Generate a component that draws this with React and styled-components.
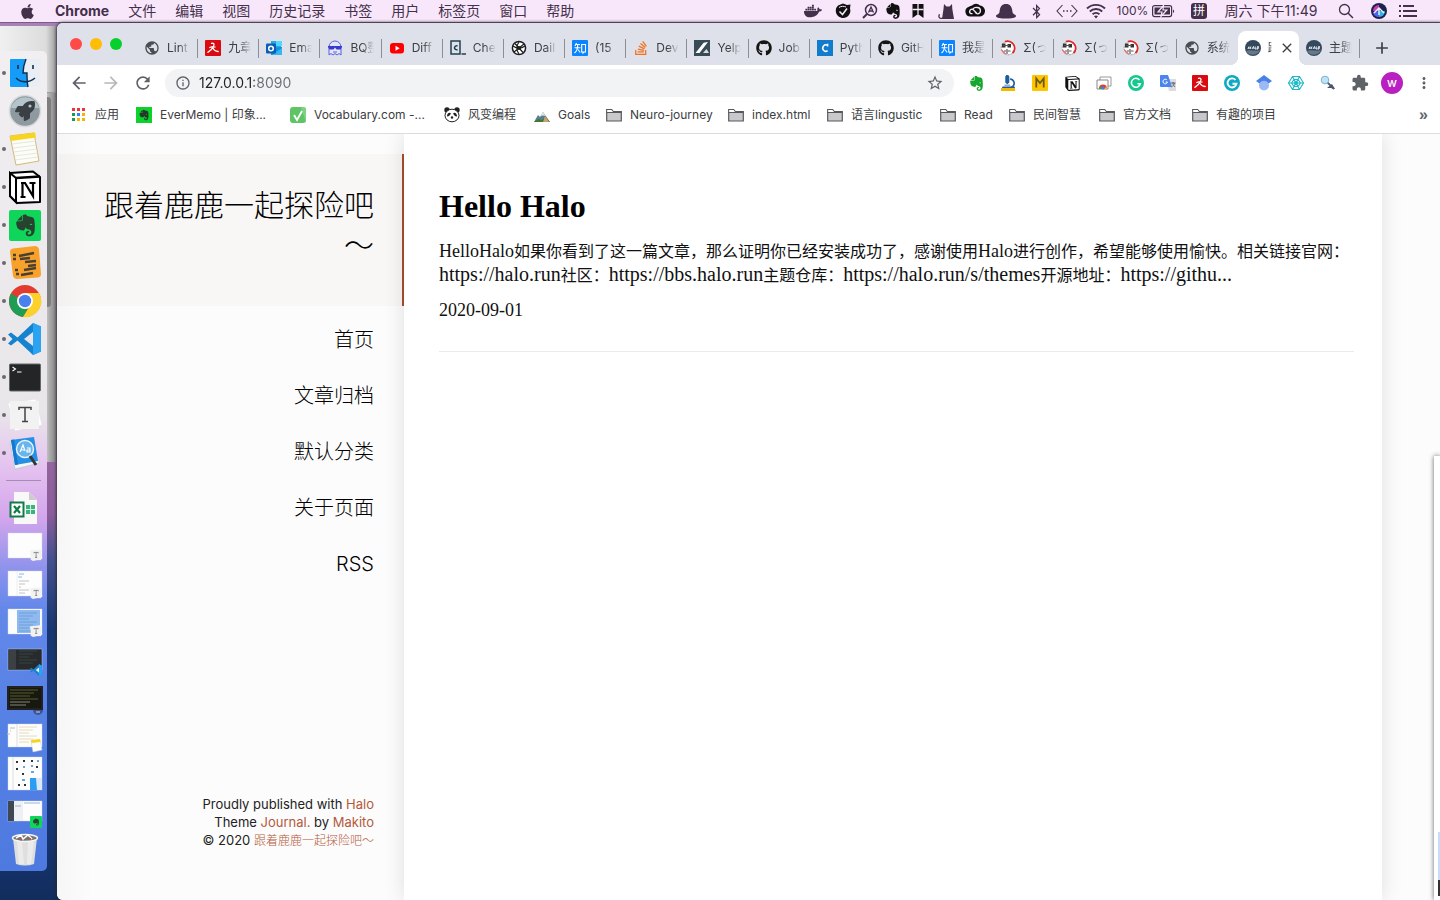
import React from 'react';
import styled, { createGlobalStyle, css } from 'styled-components';
import {
  FaApple, FaDocker, FaEvernote, FaGithub, FaBluetoothB, FaStackOverflow, FaRocket, FaMicroscope,
} from 'react-icons/fa';
import {
  MdArrowBack, MdArrowForward, MdRefresh, MdStarBorder, MdInfoOutline, MdMoreVert, MdAdd, MdClose,
  MdExtension, MdPublic,
} from 'react-icons/md';
import { SiNotion } from 'react-icons/si';

const UI_FONT = `Inter, "Noto Sans CJK SC", sans-serif`;
const SERIF_FONT = `"Liberation Serif", "Noto Sans CJK SC", serif`;

const GlobalStyle = createGlobalStyle`
  *, *::before, *::after { box-sizing: border-box; }
  body { margin: 0; font-family: ${UI_FONT}; color: #202124; }
  h1, h2, p, ul { margin: 0; padding: 0; }
  ul { list-style: none; }
  a { color: inherit; text-decoration: none; }
  button { border: 0; padding: 0; background: none; color: inherit; font: inherit; }
  svg { display: block; flex: none; }
`;

/* ---------- desktop ---------- */

const Desktop = styled.div`
  position: relative;
  display: flex;
  flex-direction: column;
  min-height: 100vh;
  overflow: hidden;
  background: linear-gradient(#a983b8 0, #94689f 50%, #8c5c9b 57%, #45518f 62%, #17366f 70%, #1b3f83 85%, #122c5d 100%);
`;

const MenuBar = styled.header`
  display: flex;
  align-items: center;
  justify-content: space-between;
  height: 23px;
  padding: 0 18px 0 0;
  background: #f8e7fb;
  border-bottom: 1px solid #7a5c88;
  color: #43304a;
  font-size: 14px;
`;

const MenuList = styled.nav`
  display: flex;
  align-items: center;
  gap: 19px;
  padding-left: 19px;
  line-height: 22px;
`;

const MenuButton = styled.button`
  white-space: nowrap;
  font-weight: ${(p) => (p.$strong ? 700 : 400)};
`;

const StatusList = styled.div`
  display: flex;
  align-items: center;
`;

const StatusItem = styled.div`
  display: flex;
  align-items: center;
  justify-content: center;
  gap: 4px;
  width: ${(p) => p.$w}px;
  white-space: nowrap;
  line-height: 22px;
  font-size: ${(p) => (p.$small ? 12 : 14)}px;
`;

const InputBadge = styled.span`
  width: 16px;
  height: 16px;
  border-radius: 3px;
  background: #43304a;
  color: #fff;
  font-size: 12px;
  line-height: 16px;
  text-align: center;
`;

const Workspace = styled.div`
  flex: 1;
  display: flex;
`;

const DockSide = styled.div`
  position: relative;
  flex: 0 0 57px;
  padding-top: 28px;
`;

const BackWindow = styled.div`
  position: absolute;
  left: 0;
  top: 3px;
  width: 56px;
  height: 436px;
  background: linear-gradient(90deg, #c6c6c6 46px, #a8a8a8 50px, #8b8b8b 55px);
  &::before {
    content: '';
    display: block;
    height: 67px;
    border-bottom: 1px solid #9b9b9b;
    background: linear-gradient(90deg, #f0f0f0, #dcdcdc 46px, #a5a5a5 55px);
  }
`;

const BackScroll = styled.div`
  position: absolute;
  left: 44px;
  top: 74px;
  width: 7px;
  height: 210px;
  border-radius: 4px;
  background: #7e7e7e;
`;

const Dock = styled.ul`
  position: relative;
  width: 47px;
  padding: 3px 0 2px;
  border-radius: 0 5px 5px 0;
  background: linear-gradient(#f1eff1 0, #e9e6ea 44%, #e6c6f0 50%, #d3a5ec 57%, #8f93ec 63%, #6388ea 68%, #5580e4 82%, #4e79df 100%);
`;

const DockItem = styled.li`
  display: flex;
  align-items: center;
  height: 38px;
  &::before {
    content: '';
    width: 4px;
    height: 4px;
    margin: 0 2px;
    border-radius: 50%;
    background: ${(p) => (p.$running ? '#6c686e' : 'transparent')};
  }
  > svg { width: 34px; height: 34px; overflow: visible; }
`;

const DockRule = styled.li`
  height: 17px;
  margin: 0 6px;
  padding-top: 8px;
  &::before { content: ''; display: block; height: 1px; background: #a98cb4; }
`;

const SideWindow = styled.div`
  position: absolute;
  right: 0;
  bottom: 0;
  width: 6px;
  height: 444px;
  padding: 376px 0 0 4px;
  background: #fff;
  box-shadow: 0 0 5px rgba(0, 0, 0, 0.6);
  &::before {
    content: '';
    display: block;
    height: 64px;
    background: linear-gradient(#c4defa 48px, #333 48px);
  }
`;

/* ---------- browser ---------- */

const Browser = styled.section`
  position: relative;
  flex: 1;
  min-width: 0;
  display: flex;
  flex-direction: column;
  overflow: hidden;
  border-radius: 6px 0 0 6px;
  background: #fff;
  box-shadow: 0 0 3px 1px rgba(40, 40, 40, 0.8);
`;

const TabStrip = styled.div`
  display: flex;
  align-items: stretch;
  height: 42px;
  background: #dee1e9;
`;

const Lights = styled.div`
  flex: 0 0 80px;
  display: flex;
  gap: 8px;
  padding: 15px 0 0 13px;
`;

const Light = styled.button`
  width: 12px;
  height: 12px;
  border-radius: 50%;
  background: ${(p) => p.$color};
`;

const TabList = styled.div`
  flex: 1;
  min-width: 0;
  display: flex;
  padding-top: 8px;
`;

const Tab = styled.button`
  position: relative;
  flex: 1 1 0;
  min-width: 0;
  display: flex;
  align-items: center;
  gap: 7px;
  padding: 0 8px 0 7px;
  font-size: 12px;
  line-height: 20px;
  color: #3c4043;
  text-align: left;
  border-radius: 8px 8px 0 0;
  > svg { width: 16px; height: 16px; }
  ${(p) => p.$active
    ? css`
      background: #fff;
      z-index: 1;
      &::before, &::after {
        content: '';
        position: absolute;
        bottom: 0;
        width: 8px;
        height: 8px;
      }
      &::before { left: -8px; background: radial-gradient(circle at 0 0, transparent 8px, #fff 8px); }
      &::after { right: -8px; background: radial-gradient(circle at 100% 0, transparent 8px, #fff 8px); }
    `
    : css`
      &::after {
        content: '';
        position: absolute;
        right: 0;
        top: 8px;
        width: 1px;
        height: 19px;
        background: ${p.$rule ? '#8b8e94' : 'transparent'};
      }
    `}
`;

const TabTitle = styled.span`
  flex: 1;
  min-width: 0;
  overflow: hidden;
  white-space: nowrap;
  mask-image: linear-gradient(90deg, #000 50%, transparent 100%);
`;

const ActiveTitle = styled(TabTitle)`
  flex: 0 0 4px;
`;

const NewTab = styled.button`
  flex: 0 0 80px;
  display: flex;
  align-items: center;
  padding: 8px 0 0 12px;
  color: #3c4043;
`;

const Toolbar = styled.div`
  display: flex;
  align-items: center;
  height: 36px;
  padding-left: 6px;
  color: #5f6368;
`;

const ToolButton = styled.button`
  flex: 0 0 32px;
  height: 32px;
  display: flex;
  align-items: center;
  justify-content: center;
  opacity: ${(p) => (p.$dim ? 0.45 : 1)};
`;

const Omnibox = styled.label`
  flex: 1;
  min-width: 0;
  display: flex;
  align-items: center;
  gap: 8px;
  height: 28px;
  margin: 0 6px;
  padding: 0 10px;
  border-radius: 14px;
  background: #f1f3f4;
`;

const Address = styled.input`
  flex: 1;
  min-width: 0;
  height: 24px;
  padding: 0;
  border: 0;
  outline: 0;
  font: 14px/24px ${UI_FONT};
  color: #202124;
  background: linear-gradient(90deg, #202124 55px, #6b6f74 55px);
  -webkit-background-clip: text;
  background-clip: text;
  -webkit-text-fill-color: transparent;
`;

const Avatar = styled.span`
  width: 22px;
  height: 22px;
  border-radius: 50%;
  background: #b91fc1;
  color: #fff;
  font-size: 12px;
  font-weight: 500;
  line-height: 22px;
`;

const Bookmarks = styled.nav`
  display: flex;
  align-items: center;
  height: 33px;
  padding: 0 12px 4px 14px;
  border-bottom: 1px solid #dadce0;
  font-size: 12px;
`;

const Bookmark = styled.a`
  flex: 0 0 ${(p) => p.$w}px;
  display: flex;
  align-items: center;
  gap: 8px;
  white-space: nowrap;
  line-height: 20px;
  color: #3c4043;
`;

const MoreBookmarks = styled.button`
  margin-left: auto;
  font: 600 16px/20px "Liberation Sans", sans-serif;
  color: #5f6368;
`;

/* ---------- blog page ---------- */

const Page = styled.div`
  flex: 1;
  display: flex;
  padding-right: 58px;
  background: #fcfcfc;
`;

const Sidebar = styled.aside`
  flex: 0 0 347px;
  display: flex;
  flex-direction: column;
  padding: 20px 0 50px;
  text-align: right;
  background: linear-gradient(90deg, rgba(0, 0, 0, 0.025), transparent 36px);
`;

const SiteHeader = styled.header`
  padding: 32px 28px 40px;
  background: rgba(150, 120, 90, 0.04);
  border-right: 2px solid #a94f2e;
`;

const SiteTitle = styled.h1`
  font: 300 30px/40px ${SERIF_FONT};
  color: #000;
`;

const SiteNav = styled.nav`
  display: flex;
  flex-direction: column;
  margin-top: 6px;
  padding-right: 30px;
`;

const NavLink = styled.a`
  font-size: 20px;
  font-weight: 300;
  line-height: 56px;
  color: #000;
`;

const Credits = styled.footer`
  margin-top: auto;
  padding-right: 30px;
  font-size: 13px;
  line-height: 18px;
  color: #222;
  a { color: #b5593a; }
`;

const SiteLink = styled.a`
  font-size: 12px;
  font-weight: 300;
`;

const Main = styled.main`
  flex: 1;
  min-width: 0;
  padding: 52px 28px 40px 35px;
  background: #fff;
  box-shadow: 0 0 20px rgba(0, 0, 0, 0.12);
  clip-path: inset(0 -30px);
`;

const Post = styled.article`
  padding-bottom: 29px;
  border-bottom: 1px solid #ebebeb;
  font: 16px/24px ${SERIF_FONT};
  color: #111;
`;

const PostTitle = styled.h2`
  margin-bottom: 14px;
  font: 700 32px/40px ${SERIF_FONT};
  color: #000;
`;

const Latin = styled.span`
  font-size: ${(p) => (p.$url ? 20 : 18)}px;
  line-height: 18px;
`;

const PostDate = styled.time`
  display: block;
  margin-top: 10px;
  font-size: 18px;
`;

/* ---------- small drawings ---------- */

const Svg = ({ size = 16, box = 16, children }) => (
  <svg width={size} height={size} viewBox={`0 0 ${box} ${box}`} fill="none" aria-hidden="true">{children}</svg>
);

const Folder = () => (
  <Svg>
    <path d="M.7 14V2.500h5l1.600 2h8V14z" fill="#c9c9cb" stroke="#55585c" strokeWidth="1.200" />
    <path d="M1.300 3.100h4l1.600 2H1.300z" fill="#fff" />
    <path d="M.7 5.500h14.600" stroke="#55585c" />
  </Svg>
);
const Globe = () => <MdPublic size={18} color="#4a4e53" />;
const RedRunner = () => (
  <Svg>
    <rect width="16" height="16" rx="1" fill="#d90b10" />
    <path d="M6.500 3.300C8.500 2.800 9.700 4 8.600 6 7.500 8.500 5.500 11 2.800 12.300M7.800 7.800c1 2.200 2.700 3.800 5.400 3.700M4.800 7.500c1.800-.8 3.600-1 5.200-.5" stroke="#fff" strokeWidth="1.300" strokeLinecap="round" />
  </Svg>
);
const Outlook = () => (
  <Svg>
    <path d="M5 1h10v7H5z" fill="#28a8ea" /><path d="M10 1h6v5h-6z" fill="#50d9ff" />
    <path d="M5 8l11-1v8H5z" fill="#1490df" /><path d="M16 8v7H6z" fill="#35b8f1" />
    <rect y="3.500" width="10" height="10" rx="1" fill="#0a5fb4" />
    <circle cx="5" cy="8.500" r="2.300" stroke="#fff" strokeWidth="1.500" />
  </Svg>
);
const Ghost = () => (
  <Svg>
    <path d="M2 15V7a6 6 0 0112 0v8l-2-1.500-2 1.500-2-1.500L6 15l-2-1.500z" fill="#e4e6fb" stroke="#5a5ee0" />
    <path d="M1 6h14v1l-1.500 2.500h-4L8 7.500 6.500 9.500h-4L1 7z" fill="#383bd0" />
    <path d="M6 12h4" stroke="#5a5ee0" />
  </Svg>
);
const YouTube = () => (
  <Svg><rect x="1" y="3" width="14" height="10.500" rx="3" fill="#f00" /><path d="M6.500 5.800v5L10.700 8.300z" fill="#fff" /></Svg>
);
const Codecademy = () => (
  <Svg>
    <rect x="1" y="1" width="9" height="13" stroke="#204056" strokeWidth="1.500" />
    <path d="M7.500 6a2 2 0 100 3.500M11.500 14H16" stroke="#204056" strokeWidth="1.500" />
  </Svg>
);
const Wheel = () => (
  <Svg>
    <circle cx="8" cy="8" r="6.600" fill="#fff" stroke="#1d1d1d" strokeWidth="1.500" />
    <path d="M2 6c4 3 8 3 12 0M8 2c-3 4-3 8 0 12M3 12l10-8M4 3.500l8 9" stroke="#1d1d1d" strokeWidth="1.200" />
    <circle cx="8" cy="8" r="2" fill="#1d1d1d" />
  </Svg>
);
const Zhihu = () => (
  <Svg>
    <rect width="16" height="16" rx="1" fill="#0a84ff" />
    <path d="M4.500 3L3 6M4 4.500h4M2.500 7.700H8.500M5.700 4.500C5.700 9 4.700 11.500 2.500 13M6 9.500l2.200 3M9.700 4.500h3.800v7.500h-1.500l-1 1V12H9.700z" stroke="#fff" strokeWidth="1.100" />
  </Svg>
);
const Pencil = () => (
  <Svg><rect width="16" height="16" fill="#394b54" /><path d="M1.500 13L9 3.500Q10 2 14 2l-8.500 11z" fill="#fff" /><path d="M9 13l3.500-4L15 13z" fill="#d8dee0" /></Svg>
);
const CBox = () => (
  <Svg><rect width="16" height="16" fill="#127bcb" /><path d="M10.600 5.500A3 3.200 0 1010.600 10.600M10.600 3.800v2.600" stroke="#fff" strokeWidth="1.500" /></Svg>
);
const Face = () => (
  <Svg>
    <circle cx="8" cy="8" r="6.800" fill="#fff" stroke="#999" strokeDasharray="2 1" />
    <path d="M5 1.700a7 7 0 017.500 11.500" stroke="#e22626" strokeWidth="1.800" />
    <path d="M2 3.500h3.500v4H2zM7.500 4H11v3.500H7.500z" fill="#333" /><path d="M3 5.500h6M4 11h2M8 11h2.500M7 9v5" stroke="#555" strokeWidth="1.200" />
    <path d="M1.500 10l4 4" stroke="#e66" strokeWidth="1.300" />
  </Svg>
);
const HaloIcon = () => (
  <Svg>
    <circle cx="8" cy="8" r="8" fill="#34495e" />
    <path d="M1 11c4-2 10 1 14-1a8 8 0 01-14 1z" fill="#65788a" />
    <path d="M3 9l1-2.500M5 9l1-2.500M3.500 8h2M7 9l1.500-2.500L9 9M10.300 6.500L10 9h1.500M12 9l.5-2.500h1L13 9z" stroke="#fff" strokeWidth=".9" />
  </Svg>
);

const TABS = [
  ['Lint', Globe], ['九章', RedRunner], ['Ema', Outlook], ['BQ整', Ghost], ['Diff', YouTube],
  ['Che', Codecademy], ['Dail', Wheel], ['(15', Zhihu],
  ['Dev', () => <FaStackOverflow color="#f2711c" />], ['Yelp', Pencil],
  ['Job', () => <FaGithub color="#161514" />], ['Pyth', CBox],
  ['GitH', () => <FaGithub color="#161514" />], ['我是', Zhihu],
  ['Σ(っ', Face], ['Σ(っ', Face], ['Σ(っ', Face], ['系统', Globe],
];

const Apps = () => (
  <Svg>
    {['#e33', '#e33', '#e33', '#1a9c50', '#2684fc', '#f5b400', '#1a9c50', '#f5b400', '#f5b400'].map((c, i) => (
      <rect key={i} x={1 + (i % 3) * 5} y={1 + Math.floor(i / 3) * 5} width="3" height="3" fill={c} />
    ))}
  </Svg>
);
const EverSquare = () => (
  <Svg><rect width="16" height="16" fill="#0bd32b" /><g transform="translate(2 2)" color="#26372b"><FaEvernote size={12} /></g></Svg>
);
const Vocab = () => (
  <Svg><rect width="16" height="16" rx="3" fill="#5fc466" /><path d="M11 0h2a3 3 0 013 3v13z" fill="#7ed283" /><path d="M4 8l3 5 5-9" stroke="#fff" strokeWidth="1.800" /></Svg>
);
const Panda = () => (
  <Svg>
    <circle cx="3" cy="3" r="2.700" fill="#222" /><circle cx="13" cy="3" r="2.700" fill="#222" />
    <ellipse cx="8" cy="8.500" rx="7" ry="6.300" fill="#fff" stroke="#222" />
    <path d="M3 9.500C3 6 5.500 5 7 6.500 6 7.500 5.500 9.500 3 9.500zM13 9.500C13 6 10.500 5 9 6.500c1 1 1.500 3 4 3z" fill="#222" />
    <circle cx="8" cy="10.500" r="1.200" fill="#222" />
  </Svg>
);
const Mountain = () => (
  <Svg><path d="M0 15L4 8l2 2 3-5 7 10z" fill="#5d7d8c" /><path d="M6.500 9L9 5l2.500 4L9 8.500z" fill="#dfe8ec" /><path d="M0 15l4-3 4 1 3-3 5 5z" fill="#3d7a3a" /><path d="M9 15l2-6 4 6z" fill="#c9a26d" /></Svg>
);

const BOOKMARKS = [
  ['应用', Apps, 65], ['EverMemo | 印象...', EverSquare, 154], ['Vocabulary.com -...', Vocab, 154],
  ['风变编程', Panda, 90], ['Goals', Mountain, 72], ['Neuro-journey', Folder, 122],
  ['index.html', Folder, 99], ['语言lingustic', Folder, 113], ['Read', Folder, 69],
  ['民间智慧', Folder, 90], ['官方文档', Folder, 93], ['有趣的项目', Folder, 90],
];

const EXTENSIONS = [
  ['Evernote', <FaEvernote size={17} color="#16a82e" />],
  ['Microscope', <Svg><path d="M1 14.500h14" stroke="#f5b800" strokeWidth="3" /><g color="#215c9c" transform="translate(2 0)"><FaMicroscope size={13} /></g></Svg>],
  ['Mercury', <Svg><rect width="16" height="16" rx="1" fill="#ffc400" /><path d="M4.300 12.500v-9L8 8l3.700-4.500v9" stroke="#6b5a20" strokeWidth="1.800" /></Svg>],
  ['Notion', <SiNotion size={15} color="#111" />],
  ['Screenshots', <Svg><path d="M4 2h11v9H4z" fill="#fff" stroke="#999" /><path d="M1 5h11v9H1z" fill="#fff" stroke="#888" /><path d="M3 13.500a4 4 0 018 0z" fill="#e33b2e" /><path d="M3 14a4 4 0 012-3l2 3z" fill="#2ea44f" /><path d="M9 14l1-3a4 4 0 011 3z" fill="#fbc116" /><circle cx="7" cy="13" r="1.500" fill="#3d7df2" /></Svg>],
  ['Grammarly', <Svg><circle cx="8" cy="8" r="8" fill="#14c88e" /><path d="M11.500 5A4.500 4.500 0 1012.300 8.800H9.500" stroke="#fff" strokeWidth="1.500" /></Svg>],
  ['Translate', <Svg><path d="M6 4h10v12H9z" fill="#dadce0" /><path d="M0 1a1 1 0 011-1h7l4 12H1a1 1 0 01-1-1z" fill="#4a86ee" /><path d="M7 5a2.300 2.300 0 10.500 2H5.500" stroke="#fff" /><path d="M10.500 8h5M13 7v1c0 2 1 3 2 4M14.500 8c-.5 2-1.500 3-3 4" stroke="#667" /></Svg>],
  ['Runner', <RedRunner />],
  ['G', <Svg><circle cx="8" cy="8" r="8" fill="#10a9c4" /><path d="M11.500 5A4.500 4.500 0 1012.500 8.700H8.500" stroke="#fff" strokeWidth="1.900" /></Svg>],
  ['Scholar', <Svg><circle cx="8" cy="10.500" r="5" fill="#9db9f4" /><path d="M8 0l8 6-3.500 2.500a5 5 0 00-9 0L0 6z" fill="#4a80ec" /></Svg>],
  ['React', <Svg><g stroke="#1cb8ca" strokeWidth="1.100"><circle cx="8" cy="8" r="1.500" /><path d="M4.500 1.500h7L15.500 8l-4 6.500h-7L.5 8zM6 4.500h4L12.500 8 10 11.500H6L3.500 8zM4.500 1.500l7 13M11.500 1.500l-7 13M.5 8h15" /></g></Svg>],
  ['Search', <Svg><path d="M7 7l7 7" stroke="#5b6170" strokeWidth="2" /><circle cx="5" cy="5" r="3.800" fill="#bfe4f8" stroke="#7ab2d4" /><path d="M7 13l5-4 3 5-4-1z" fill="#4b556a" /></Svg>],
  ['Extensions', <MdExtension size={18} />],
];

const STATUS = [
  [30, <FaDocker size={18} />],
  [30, <Svg><path d="M8 .5l4 1.500 3.500-.5-.5 4A7.300 7.300 0 113 2.500z" fill="#111" /><path d="M4.500 8.500l3 3L12 5.500" stroke="#f8e7fb" strokeWidth="1.500" /><path d="M4 4.500C6 3 9 3 11 4" stroke="#f8e7fb" /></Svg>],
  [24, <Svg><circle cx="9" cy="7" r="5.500" stroke="currentColor" strokeWidth="1.500" /><path d="M5 11l-4 4" stroke="currentColor" strokeWidth="2" /><path d="M6.500 9.500L9 4l2.500 5.500M7.500 8h3" stroke="currentColor" strokeWidth="1.300" /></Svg>],
  [22, <FaEvernote size={18} color="#111" />],
  [28, <Svg><path d="M2.500 1h11v14L8 11l-5.500 4z" fill="#111" /><path d="M8 1v10M2.500 6.500h11" stroke="#f8e7fb" strokeWidth="1.300" /></Svg>],
  [28, <Svg><path d="M4 16L5.500 6 6 1l2.500 2.500h3L14 1l.3 5L16 16z" fill="currentColor" /><path d="M5 15.300c-3.500.5-5-1-3.500-4" stroke="currentColor" strokeWidth="1.300" /></Svg>],
  [30, <Svg size={20} box={20}><path d="M7 4.500a5.500 5.500 0 018 0 5 5 0 01-1 11H5.500A5 5 0 014 5.700C5 5 6 5 7 4.500z" fill="#111" /><path d="M12 12.500l-4-4a2.300 2.300 0 10-2 4.200h1.500M8 8a4 4 0 014-1.500 3.200 3.200 0 011 6.300c-1.500.3-2.300-.8-3-1.600" stroke="#f8e7fb" strokeWidth="1.300" /></Svg>],
  [32, <Svg size={22} box={22}><path d="M1 16c0-2 3-1 3.500-4C5 6.500 7 4 11 4s6 2.500 6.500 8c.5 3 3.500 2 3.500 4 0 2-5 2.500-10 2.500S1 18 1 16z" fill="currentColor" /></Svg>],
  [28, <FaBluetoothB size={15} />],
  [34, <Svg size={22} box={22}><path d="M6.500 5L1 11l5.500 6M15.500 5l5.500 6-5.500 6" stroke="currentColor" strokeWidth="1.100" /><path d="M7 11h9" stroke="currentColor" strokeWidth="1.500" strokeDasharray="1.500 2" /></Svg>],
  [24, <Svg size={20} box={20}><g stroke="currentColor" strokeWidth="1.900"><path d="M1 7.500a13 13 0 0118 0M3.800 10.500a9 9 0 0112.400 0M6.600 13.300a5 5 0 016.800 0" /></g><path d="M8 15.300a3 3 0 014 0L10 17.500z" fill="currentColor" /></Svg>],
];

const Battery = () => (
  <svg width="23" height="14" viewBox="0 0 23 14" fill="none" aria-hidden="true">
    <rect x=".6" y="1.600" width="19" height="11" rx="2" stroke="currentColor" strokeWidth="1.200" />
    <path d="M2.500 3.500h15.500v7H2.500z" fill="currentColor" /><path d="M21 5.500c1.500.5 1.500 3 0 3.500z" fill="currentColor" />
    <path d="M11.500 1.500L6 8h4l-1 4.500L14.800 6H11z" fill="currentColor" stroke="#f8e7fb" strokeWidth="1.200" />
  </svg>
);

/* ---------- dock drawings, on a 34 unit grid ---------- */

const D = ({ children }) => <Svg size={34} box={34}>{children}</Svg>;

const TPaper = () => (
  <>
    <path d="M0 5l28-4 6 26-27 6z" fill="#fff" stroke="#ddd" strokeWidth=".5" />
    <path d="M2 3h29v28H2z" fill="#f2f2f2" />
    <path d="M11 12V9.500h12V12M17 9.500v14M14 23.500h6" stroke="#444" strokeWidth="1.500" />
  </>
);
const VsMark = () => (
  <>
    <path d="M25 1L9.500 15.500 3 10.500 0 12.500 4.500 17 0 21.500 3 23.500 9.500 18.500 25 33l8-3.500v-25z" fill="#1583d0" />
    <path d="M25 1l8 3.500v25L25 33z" fill="#29a3f2" />
    <path d="M25 10v14l-9-7z" fill="#e8e5ea" />
  </>
);
const TBadge = () => <g transform="translate(22 20) scale(.36)"><TPaper /></g>;
const Thumb = ({ children, fill = '#fdfdfd', y = 4, h = 25 }) => (
  <D><rect x="0" y={y} width="34" height={h} fill={fill} stroke="#cfd6ee" strokeWidth=".4" />{children}</D>
);
const Elephant = ({ size }) => <FaEvernote size={size} color="#27432f" />;

const APPS = [
  <D><rect x="2" y="3" width="30" height="28" rx="1" fill="#e9eef5" /><path d="M2 4a1 1 0 011-1h15c-2 5-3 10-3 14h4c0 5 0 9 1 14H3a1 1 0 01-1-1z" fill="#159cf8" /><path d="M18 3c-2 5-3 10-3 14h4c0 5 0 9 1 14M8 22c5 5 13 5 19 0" stroke="#12304d" strokeWidth="1.400" /><path d="M10 9v4M25 9v4" stroke="#12304d" strokeWidth="1.600" /></D>,
  <D><circle cx="17" cy="17" r="15.500" fill="#8f9aa0" stroke="#d5dadd" strokeWidth="1.500" /><path d="M3 14a14.500 14.500 0 0128 0z" fill="#b3c5cb" /><g transform="translate(7 7)" color="#3a4044"><FaRocket size={20} /></g></D>,
  <D><path d="M2 4l24-3 5 28-23 4z" fill="#fdfdf8" stroke="#c7a95a" strokeWidth=".8" /><path d="M2 4l25-3.500 1 5L3 9z" fill="#f8d41c" /><path d="M4 12l24-3M5 16l24-3M6 20l23-3M6 24l24-3M7 28l23-3" stroke="#dcdcd4" strokeWidth=".7" /></D>,
  <D><path d="M2 3l23-1.500L32 7v25L9 33l-7-7z" fill="#fff" stroke="#000" strokeWidth="2" strokeLinejoin="round" /><path d="M2 3l6 5v24l-6-6z" fill="#fff" stroke="#000" strokeWidth="2" /><path d="M8 8l24-1.500" stroke="#000" strokeWidth="2.400" /><path d="M13 13h4l8 13V14M14.500 13v13M12.500 27h5M21.500 13h6" stroke="#000" strokeWidth="2.200" /></D>,
  <D><rect x="1" y="2" width="32" height="31" rx="2" fill="#0fd55a" /><g transform="translate(5 5)"><Elephant size={25} /></g></D>,
  <D><path d="M2 6q0-3 3-3.500L27 0q3 0 4 3l2 25q0 3-3 3.500L9 33q-3 0-4-3z" fill="#f9a22b" /><path d="M5 9h3M5 13h3M11 10l15-3M12 13l10-1M17 16l11-1M20 20l8-1M7 24h3M16 24l12-2M8 28h3M13 29l12-2" stroke="#4b3f31" strokeWidth="2.600" /></D>,
  <D><circle cx="17" cy="17" r="16" fill="#e23b30" /><path d="M3 9.500A16 16 0 0015 33l7-12-5-3z" fill="#1f9d55" /><path d="M17 9h14A16 16 0 0115 33l8-13z" fill="#fdd12c" /><circle cx="17" cy="17" r="8" fill="#fff" /><circle cx="17" cy="17" r="6.200" fill="#4a80ee" /></D>,
  <D><VsMark /></D>,
  <D><rect x="1.500" y="4" width="31" height="27" rx="1" fill="#232526" stroke="#63686b" /><path d="M4.500 7l3 2-3 2M9 12h4.500" stroke="#fff" strokeWidth="1.100" /></D>,
  <D><TPaper /></D>,
  <D><path d="M2 6l2-2 4 24 23-4v3L7 33z" fill="#f5f5f5" stroke="#8ba" strokeWidth=".4" /><path d="M3 4l23-3 4 24-23 4z" fill="#2590e4" /><path d="M3 4l3-.5 4 25-3 .5z" fill="#1577cf" /><circle cx="17" cy="13" r="8.500" fill="#68b4ec" stroke="#e5f4fd" strokeWidth="1.500" /><path d="M12 16l3-7 2 6M13 14h3M19 12h3v4h-3v-2h3" stroke="#fff" strokeWidth="1.200" /><path d="M22 20l6 9" stroke="#33383d" strokeWidth="3" /></D>,
];

const Lines = ({ color, x = 11, y = 8, n = 6, w = 18 }) => (
  <path d={Array.from({ length: n }, (_, i) => `M${x} ${y + i * 3}h${w - (i % 3) * 4}`).join('')} stroke={color} />
);

const FILES = [
  <D><path d="M6 1h15l8 8v24H6z" fill="#f8f8f8" /><path d="M21 1v8h8z" fill="#ccc" /><path d="M18 14h9v9h-9z" fill="#37b57c" /><path d="M22.500 14v9M18 18.500h9" stroke="#d7f0e3" /><rect x="2.500" y="11.500" width="13" height="14" fill="#fff" stroke="#127a48" strokeWidth="2" /><path d="M6 15l6 7M12 15l-6 7" stroke="#127a48" strokeWidth="2.200" /></D>,
  <Thumb><TBadge /></Thumb>,
  <Thumb><path d="M9 4v25" stroke="#eee" /><path d="M11 7h5M10 10h4" stroke="#88b8ef" /><Lines color="#c4c4c4" y={14} n={5} w={10} /><TBadge /></Thumb>,
  <Thumb><path d="M9 5h23v23H9z" fill="#8fbaf0" /><Lines color="#6f9fdb" n={7} /><TBadge /></Thumb>,
  <Thumb fill="#272b2e" y={6} h={21}><path d="M1 7h7v19H1z" fill="#3b4044" /><Lines color="#38453e" n={5} /><g transform="translate(22 21) scale(.36)"><VsMark /></g></Thumb>,
  <Thumb fill="#17180f" y={6} h={22}><rect x="0" y="6" width="34" height="22" stroke="#222" strokeWidth="2" /><Lines color="#5a5c30" x={2} y={9} n={4} w={28} /><Lines color="#85857c" x={2} y={21} n={2} w={20} /><path d="M25 29h10a5 5 0 01-10 0z" fill="#3e5491" /><path d="M28 31h4" stroke="#ccd" /></Thumb>,
  <Thumb y={5} h={23}><path d="M9 5v23" stroke="#ddd" /><Lines color="#e6dcb8" /><Lines color="#bbb" x={2} n={3} y={9} w={5} /><path d="M23 22l9-1 2 10-9 2z" fill="#fff" stroke="#ccc" strokeWidth=".5" /><path d="M23 21l9-1 .5 3-9 1z" fill="#f8d41c" /></Thumb>,
  <Thumb y={0} h={33}><path d="M5 0v33" stroke="#ddd" /><path d="M8 5h2M15 4h2M23 4h2M28 10h2M8 12h2M14 17h2M10 28h2M16 28h2" stroke="#333" strokeWidth="2" /><path d="M15 10h2M23 9h2M23 15h3M14 23h3M29 4h2" stroke="#68a7de" strokeWidth="2" /><path d="M22 21h12v12H22z" fill="#2b9df2" /><path d="M28 21h6v12h-5z" fill="#dbe9f5" /></Thumb>,
  <Thumb y={6} h={20}><path d="M0 6h6v20H0z" fill="#3f4850" /><path d="M6 6h9v20H6z" fill="#eef0f3" /><path d="M16 8h16M7 11h6" stroke="#9ab4d4" /><rect x="22" y="21" width="12" height="12" rx="1" fill="#0fd55a" /><g transform="translate(24 23)"><Elephant size={8} /></g></Thumb>,
  <D><path d="M5 5h24l-3 26q-9 3-18 0z" fill="#dfdfdf" /><path d="M9 9l2 22h5L14 9zM20 9l-1 22h4l3-22z" fill="#ebebeb" /><ellipse cx="17" cy="5" rx="12.500" ry="3.500" fill="#74777a" stroke="#f5f5f5" strokeWidth="1.400" /><path d="M8 5l5-3 2 4 5-4 4 4" stroke="#fff" strokeWidth="1.500" /><path d="M11 6l3 1M20 5l3 1" stroke="#bb5540" strokeWidth="1.500" /></D>,
];

export default function App() {
  return (
    <Desktop lang="zh-CN">
      <GlobalStyle />
      <MenuBar>
        <MenuList aria-label="菜单栏">
          <MenuButton aria-label="Apple"><FaApple size={17} /></MenuButton>
          <MenuButton $strong>Chrome</MenuButton>
          {['文件', '编辑', '视图', '历史记录', '书签', '用户', '标签页', '窗口', '帮助'].map((t) => (
            <MenuButton key={t}>{t}</MenuButton>
          ))}
        </MenuList>
        <StatusList>
          {STATUS.map(([w, icon], i) => <StatusItem key={i} $w={w}>{icon}</StatusItem>)}
          <StatusItem $w={76} $small>100%<Battery /></StatusItem>
          <StatusItem $w={30}><InputBadge>拼</InputBadge></StatusItem>
          <StatusItem $w={114}>周六 下午11:49</StatusItem>
          <StatusItem $w={36}>
            <Svg><circle cx="6.500" cy="6.500" r="5" stroke="currentColor" strokeWidth="1.300" /><path d="M10 10l5 5" stroke="currentColor" strokeWidth="1.500" /></Svg>
          </StatusItem>
          <StatusItem $w={30}>
            <Svg><circle cx="8" cy="8" r="8" fill="#20204b" /><path d="M2 8a6 6 0 016-6v6z" fill="#cb3cb6" /><path d="M14 8a6 6 0 01-6 6V8z" fill="#2fb4e8" /><path d="M2 9c0 3 3 5 6 5V8z" fill="#4b63ee" /><path d="M3 10l5-5 5 5M8 5v7" stroke="#e9f3ff" strokeWidth="1.400" /></Svg>
          </StatusItem>
          <StatusItem $w={28}>
            <Svg size={18} box={18}><path d="M0 4h2M0 9h2M0 14h2M4 4h11M4 9h14M4 14h14" stroke="currentColor" strokeWidth="2" /></Svg>
          </StatusItem>
        </StatusList>
      </MenuBar>

      <Workspace>
        <DockSide>
          <BackWindow />
          <BackScroll />
          <Dock>
            {APPS.map((icon, i) => <DockItem key={i} $running={i !== 1}>{icon}</DockItem>)}
            <DockRule />
            {FILES.map((icon, i) => <DockItem key={i}>{icon}</DockItem>)}
          </Dock>
        </DockSide>

        <Browser>
          <TabStrip>
            <Lights>
              <Light $color="#ff4b47" aria-label="关闭" />
              <Light $color="#ffbd05" aria-label="最小化" />
              <Light $color="#06d02b" aria-label="缩放" />
            </Lights>
            <TabList>
              {TABS.map(([title, Icon], i) => (
                <Tab key={i} $rule={i < TABS.length - 1}><Icon /><TabTitle>{title}</TabTitle></Tab>
              ))}
              <Tab $active><HaloIcon /><ActiveTitle>跟</ActiveTitle><MdClose size={16} /></Tab>
              <Tab $rule><HaloIcon /><TabTitle>主题</TabTitle></Tab>
            </TabList>
            <NewTab aria-label="新标签页"><MdAdd size={20} /></NewTab>
          </TabStrip>

          <Toolbar>
            <ToolButton aria-label="后退"><MdArrowBack size={20} /></ToolButton>
            <ToolButton aria-label="前进" $dim><MdArrowForward size={20} /></ToolButton>
            <ToolButton aria-label="重新加载"><MdRefresh size={20} /></ToolButton>
            <Omnibox>
              <MdInfoOutline size={16} />
              <Address aria-label="地址" defaultValue="127.0.0.1:8090" />
              <MdStarBorder size={18} />
            </Omnibox>
            {EXTENSIONS.map(([name, icon]) => <ToolButton key={name} aria-label={name}>{icon}</ToolButton>)}
            <ToolButton aria-label="用户"><Avatar>w</Avatar></ToolButton>
            <ToolButton aria-label="更多"><MdMoreVert size={18} /></ToolButton>
          </Toolbar>

          <Bookmarks>
            {BOOKMARKS.map(([title, Icon, w]) => (
              <Bookmark key={title} href="#" $w={w}><Icon />{title}</Bookmark>
            ))}
            <MoreBookmarks>»</MoreBookmarks>
          </Bookmarks>

          <Page>
            <Sidebar>
              <SiteHeader><SiteTitle><a href="#">跟着鹿鹿一起探险吧～</a></SiteTitle></SiteHeader>
              <SiteNav>
                {['首页', '文章归档', '默认分类', '关于页面', 'RSS'].map((t) => (
                  <NavLink key={t} href="#">{t}</NavLink>
                ))}
              </SiteNav>
              <Credits>
                <p>Proudly published with <a href="#">Halo</a></p>
                <p>Theme <a href="#">Journal.</a> by <a href="#">Makito</a></p>
                <p>© 2020 <SiteLink href="#">跟着鹿鹿一起探险吧～</SiteLink></p>
              </Credits>
            </Sidebar>
            <Main>
              <Post>
                <PostTitle><a href="#">Hello Halo</a></PostTitle>
                <p>
                  <Latin>HelloHalo</Latin>如果你看到了这一篇文章，那么证明你已经安装成功了，感谢使用<Latin>Halo</Latin>进行创作，希望能够使用愉快。相关链接官网：<Latin $url>https://halo.run</Latin>社区：<Latin $url>https://bbs.halo.run</Latin>主题仓库：<Latin $url>https://halo.run/s/themes</Latin>开源地址：<Latin $url>https://githu...</Latin>
                </p>
                <PostDate dateTime="2020-09-01">2020-09-01</PostDate>
              </Post>
            </Main>
          </Page>
        </Browser>
      </Workspace>
      <SideWindow />
    </Desktop>
  );
}
